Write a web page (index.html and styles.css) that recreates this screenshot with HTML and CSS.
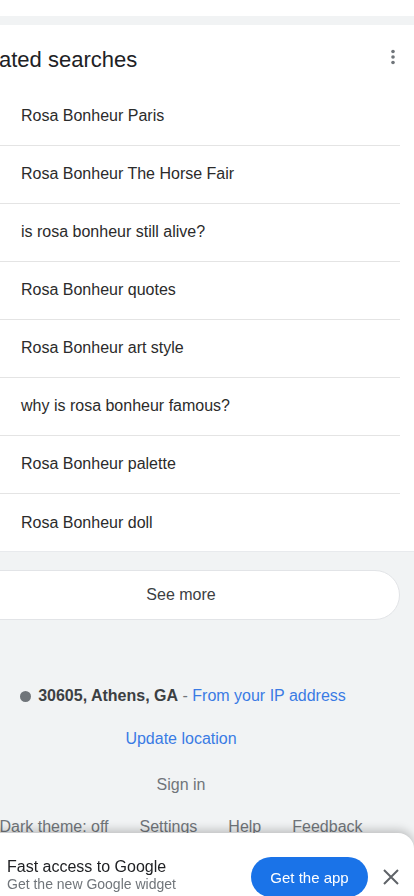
FILE: index.html
```html
<!DOCTYPE html>
<html lang="en">
<head>
<meta charset="utf-8">
<meta name="viewport" content="width=device-width, initial-scale=1">
<title>Related searches</title>
<link rel="stylesheet" href="styles.css">
</head>
<body>
<div class="page">
  <div class="top-strip"></div>
  <section class="card">
    <div class="inner">
      <div class="card-head">
        <h2 class="heading">Related searches</h2>
        <span class="kebab" aria-label="More options">
          <svg width="14" height="20" viewBox="0 0 14 20"><circle cx="7" cy="4.5" r="1.8" fill="#70757a"/><circle cx="7" cy="10" r="1.8" fill="#70757a"/><circle cx="7" cy="15.5" r="1.8" fill="#70757a"/></svg>
        </span>
      </div>
      <ul class="list">
        <li class="item">Rosa Bonheur Paris</li>
        <li class="item">Rosa Bonheur The Horse Fair</li>
        <li class="item">is rosa bonheur still alive?</li>
        <li class="item">Rosa Bonheur quotes</li>
        <li class="item">Rosa Bonheur art style</li>
        <li class="item">why is rosa bonheur famous?</li>
        <li class="item">Rosa Bonheur palette</li>
        <li class="item">Rosa Bonheur doll</li>
      </ul>
    </div>
  </section>
  <div class="inner">
    <div class="more-wrap">
      <div class="see-more">See more</div>
    </div>
    <footer class="footer">
      <div class="loc"><span class="dot"></span><b class="place">30605, Athens, GA</b><span class="sep"> - </span><span class="link">From your IP address</span></div>
      <div class="update link">Update location</div>
      <div class="signin">Sign in</div>
      <div class="links"><span>Dark theme: off</span><span>Settings</span><span>Help</span><span>Feedback</span></div>
    </footer>
  </div>
</div>
<div class="sheet">
  <div class="sheet-text">
    <div class="sheet-title">Fast access to Google</div>
    <div class="sheet-sub">Get the new Google widget</div>
  </div>
  <div class="app-btn">Get the app</div>
  <span class="close" aria-label="Close">
    <svg width="18" height="18" viewBox="0 0 18 18"><path d="M2 2L16 16M16 2L2 16" stroke="#5f6368" stroke-width="2" fill="none"/></svg>
  </span>
</div>
</body>
</html>
```

FILE: styles.css
```css
* { box-sizing: border-box; }
html, body {
  margin: 0;
  padding: 0;
}
body {
  background: #f1f3f4;
  font-family: "Liberation Sans", Arial, sans-serif;
  color: #202124;
  width: 414px;
  height: 896px;
  overflow: hidden;
}
.page {
  width: 414px;
  overflow: hidden;
}
.top-strip {
  height: 16px;
  background: #fff;
  margin-bottom: 9px;
}
.card {
  background: #fff;
  border-bottom: 1px solid #e8eaed;
}
.inner {
  margin-left: -38px;
  margin-right: 14px;
}
.card-head {
  height: 63px;
  display: flex;
  align-items: center;
  justify-content: space-between;
}
.heading {
  margin: 0;
  padding: 7px 0 0 4px;
  font-size: 22px;
  line-height: 28px;
  font-weight: normal;
  color: #202124;
  white-space: nowrap;
}
.kebab {
  display: flex;
  width: 14px;
  height: 20px;
}
.list {
  list-style: none;
  margin: 0;
  padding: 0;
}
.item {
  height: 58px;
  display: flex;
  align-items: center;
  padding: 0 0 1px 59px;
  border-bottom: 1px solid #e4e4e4;
  font-size: 16px;
  color: #2b2b2b;
}
.item:last-child {
  border-bottom: none;
  height: 57px;
  padding-bottom: 0;
}
.more-wrap {
  padding-top: 18px;
}
.see-more {
  height: 50px;
  border: 1px solid #e2e4e7;
  border-radius: 25px;
  background: #fff;
  display: flex;
  align-items: center;
  justify-content: center;
  font-size: 16px;
  color: #3c4043;
}
.footer {
  padding-top: 66px;
  text-align: center;
  font-size: 16px;
  color: #70757a;
}
.loc {
  display: flex;
  align-items: center;
  justify-content: center;
  height: 20px;
  font-size: 16px;
  padding-left: 4px;
}
.dot {
  width: 11px;
  height: 11px;
  border-radius: 50%;
  background: #70757a;
  margin-right: 7px;
}
.place {
  color: #3c4043;
  font-weight: bold;
  font-size: 16px;
}
.sep {
  white-space: pre;
  color: #70757a;
}
.link {
  color: #3a7be4;
}
.update {
  margin-top: 23px;
  line-height: 20px;
  font-size: 16px;
}
.signin {
  margin-top: 26px;
  line-height: 20px;
}
.links {
  margin-top: 22px;
  line-height: 20px;
  display: flex;
  justify-content: center;
  gap: 31px;
  white-space: nowrap;
}
.sheet {
  position: fixed;
  left: -24px;
  right: 0;
  bottom: 0;
  height: 63px;
  background: #fff;
  border-top-right-radius: 16px;
  box-shadow: 0 -3px 10px rgba(0, 0, 0, 0.22);
  display: flex;
  align-items: flex-start;
  padding: 0 0 0 31px;
}
.sheet-text {
  flex: 1;
  padding-top: 25px;
}
.sheet-title {
  font-size: 16px;
  line-height: 18px;
  color: #202124;
}
.sheet-sub {
  font-size: 14px;
  line-height: 17px;
  color: #70757a;
}
.app-btn {
  margin-top: 24px;
  width: 117px;
  height: 40px;
  border-radius: 20px;
  background: #1a73e8;
  color: #fff;
  font-size: 15px;
  display: flex;
  align-items: center;
  justify-content: center;
}
.close {
  display: flex;
  align-items: center;
  justify-content: center;
  width: 46px;
  height: 40px;
  margin-top: 24px;
}
```
